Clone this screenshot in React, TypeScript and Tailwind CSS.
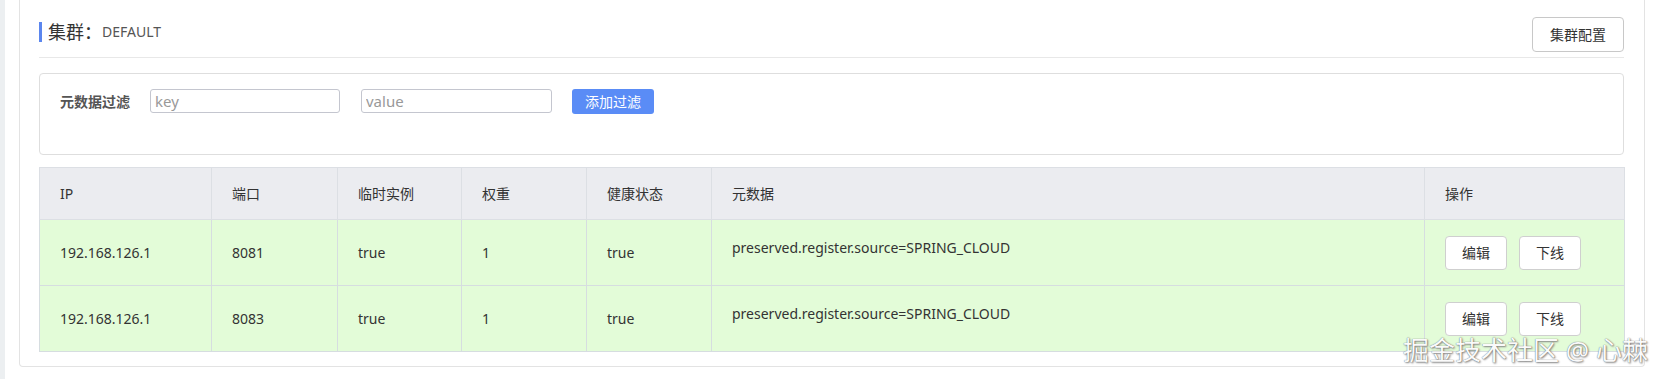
import React from "react";

interface Instance {
  ip: string;
  port: number;
  ephemeral: string;
  weight: number;
  healthy: string;
  metadata: string;
}

const instances: Instance[] = [
  { ip: "192.168.126.1", port: 8081, ephemeral: "true", weight: 1, healthy: "true", metadata: "preserved.register.source=SPRING_CLOUD" },
  { ip: "192.168.126.1", port: 8083, ephemeral: "true", weight: 1, healthy: "true", metadata: "preserved.register.source=SPRING_CLOUD" },
];

const columns = [
  { label: "IP", width: "w-[172px]" },
  { label: "端口", width: "w-[126px]" },
  { label: "临时实例", width: "w-[124px]" },
  { label: "权重", width: "w-[125px]" },
  { label: "健康状态", width: "w-[125px]" },
  { label: "元数据", width: "w-[713px]" },
  { label: "操作", width: "w-[200px]" },
];

const font = "font-['Noto_Sans','Noto_Sans_CJK_SC',sans-serif]";

export default function App() {
  return (
    <div className={`relative w-[1653px] h-[379px] overflow-hidden bg-white flex ${font} text-[#333]`}>
      {/* sidebar edge */}
      <div className="w-[5px] shrink-0 bg-[#eceff1]" />

      {/* Cluster card */}
      <div className="ml-[14px] w-[1626px] h-[367px] border-x border-b border-[#e3e3e3] rounded-b-[4px] pl-[19px] pr-[20px]">
        {/* Header */}
        <div className="flex justify-between items-start pt-[17px] h-[58px] border-b border-[#e8e8e8]">
          <div className="mt-[5px] flex items-center h-[20px] border-l-[3px] border-[#5b86ee] pl-[6px]">
            <span className="text-[18px] leading-[20px] text-[#333]">集群：</span>
            <span className="text-[14px] leading-[20px] text-[#555]">DEFAULT</span>
          </div>
          <button className="h-[35px] w-[92px] rounded-[4px] border border-[#c8c8c8] bg-white text-[14px] text-[#333]">
            集群配置
          </button>
        </div>

        {/* Metadata filter */}
        <div className="mt-[15px] h-[82px] border border-[#dedede] rounded-[4px] pl-[20px] pt-[15px]">
          <div className="flex items-center h-[24px]">
            <span className="w-[90px] text-[14px] font-semibold text-[#555]">元数据过滤</span>
            <input
              className="w-[190px] h-[24px] border border-[#c4c6cf] rounded-[3px] px-[4px] text-[15px] placeholder:text-[#999] outline-none"
              placeholder="key"
            />
            <input
              className="ml-[21px] w-[191px] h-[24px] border border-[#c4c6cf] rounded-[3px] px-[4px] text-[15px] placeholder:text-[#999] outline-none"
              placeholder="value"
            />
            <button className="ml-[20px] w-[82px] h-[25px] rounded-[3px] bg-[#5a8cf6] text-white text-[14px]">
              添加过滤
            </button>
          </div>
        </div>

        {/* Instances table */}
        <table className="mt-[12px] w-[1586px] table-fixed border-collapse text-[14px]">
          <thead>
            <tr className="h-[52px] bg-[#ebecf0]">
              {columns.map((c) => (
                <th key={c.label} className={`${c.width} border border-[#dcdfe4] pl-[20px] text-left font-normal text-[#333]`}>
                  {c.label}
                </th>
              ))}
            </tr>
          </thead>
          <tbody>
            {instances.map((row) => (
              <tr key={row.port} className="h-[66px] bg-[#e3fcd8]">
                <td className="border border-[#d6dde0] pl-[20px]">{row.ip}</td>
                <td className="border border-[#d6dde0] pl-[20px]">{row.port}</td>
                <td className="border border-[#d6dde0] pl-[20px]">{row.ephemeral}</td>
                <td className="border border-[#d6dde0] pl-[20px]">{row.weight}</td>
                <td className="border border-[#d6dde0] pl-[20px]">{row.healthy}</td>
                <td className="border border-[#d6dde0] pl-[20px] pt-[17px] align-top">{row.metadata}</td>
                <td className="border border-[#d6dde0] pl-[20px]">
                  <div className="flex gap-[12px]">
                    <button className="w-[62px] h-[34px] rounded-[4px] border border-[#cfcfcf] bg-white text-[14px] text-[#333]">
                      编辑
                    </button>
                    <button className="w-[62px] h-[34px] rounded-[4px] border border-[#cfcfcf] bg-white text-[14px] text-[#333]">
                      下线
                    </button>
                  </div>
                </td>
              </tr>
            ))}
          </tbody>
        </table>
      </div>

      {/* watermark */}
      <div className="absolute left-[1403px] top-[333px] text-[26px] leading-[34px] text-[#fafafa] whitespace-nowrap [text-shadow:0_0_1px_#555,1px_1px_2px_#888]">
        掘金技术社区 @ 心棘
      </div>
    </div>
  );
}
